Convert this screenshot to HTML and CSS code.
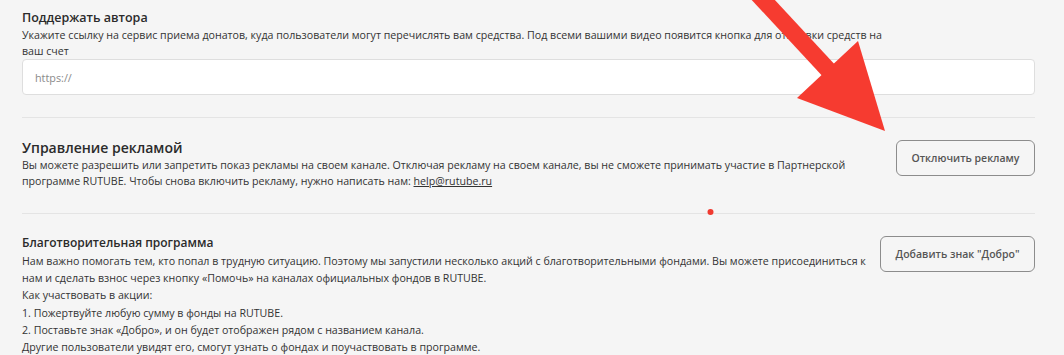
FILE: index.html
```html
<!DOCTYPE html>
<html lang="ru">
<head>
    <meta charset="UTF-8">
    <meta name="viewport" content="width=device-width, initial-scale=1.0">
    <title>Настройки канала</title>
    <link rel="stylesheet" href="styles.css">
</head>
<body>
    <div class="settings">
        <!-- Донаты -->
        <section class="section section-donate">
            <h2 class="section-title">Поддержать автора</h2>
            <p class="section-text">Укажите ссылку на сервис приема донатов, куда пользователи могут перечислять вам средства. Под всеми вашими видео появится кнопка для отправки средств на ваш счет</p>
            <input class="url-input" type="text" placeholder="https://">
        </section>

        <!-- Реклама -->
        <section class="section section-ads">
            <div class="section-body">
                <h2 class="section-title">Управление рекламой</h2>
                <p class="section-text">Вы можете разрешить или запретить показ рекламы на своем канале. Отключая рекламу на своем канале, вы не сможете принимать участие в Партнерской программе RUTUBE. Чтобы снова включить рекламу, нужно написать нам: <a href="mailto:help@rutube.ru">help@rutube.ru</a></p>
            </div>
            <button class="btn-outline" type="button">Отключить рекламу</button>
        </section>

        <!-- Благотворительность -->
        <section class="section section-charity">
            <div class="section-body">
                <h2 class="section-title">Благотворительная программа</h2>
                <p class="section-text">Нам важно помогать тем, кто попал в трудную ситуацию. Поэтому мы запустили несколько акций с благотворительными фондами. Вы можете присоединиться к нам и сделать взнос через кнопку «Помочь» на каналах официальных фондов в RUTUBE.<br>
                Как участвовать в акции:<br>
                1. Пожертвуйте любую сумму в фонды на RUTUBE.<br>
                2. Поставьте знак «Добро», и он будет отображен рядом с названием канала.<br>
                Другие пользователи увидят его, смогут узнать о фондах и поучаствовать в программе.</p>
            </div>
            <button class="btn-outline" type="button">Добавить знак "Добро"</button>
        </section>
    </div>

    <!-- Пометки поверх скриншота -->
    <svg class="annotation" width="1064" height="355" viewBox="0 0 1064 355">
        <line x1="754" y1="-10" x2="832" y2="74" stroke="#f63b30" stroke-width="17"/>
        <polygon points="797,98 858,41 885,131" fill="#f63b30"/>
        <circle cx="710.5" cy="212" r="3" fill="#f03a30"/>
    </svg>
</body>
</html>
```

FILE: styles.css
```css
body {
    margin: 0;
    background-color: #f5f5f5;
    font-family: "Open Sans", "Noto Sans", sans-serif;
    color: #2f2f2f;
    position: relative;
    overflow: hidden;
}
.settings {
    padding: 0 29px 0 22px;
}
.section {
    border-bottom: 1px solid #e4e4e4;
}
.section:last-child {
    border-bottom: none;
}
.section-donate {
    padding: 10px 0 22px;
}
.section-ads {
    display: flex;
    align-items: flex-start;
    gap: 8px;
    padding: 21px 0 24px;
}
.section-charity {
    display: flex;
    align-items: flex-start;
    gap: 8px;
    padding: 22px 0 0;
}
.section-body {
    flex: 1;
}
.section-title {
    margin: 0;
    font-size: 12.5px;
    font-weight: 600;
    line-height: 16px;
    color: #2b2b2b;
}
.section-ads .section-title {
    font-size: 14px;
    line-height: 17px;
}
.section-charity .section-title {
    font-size: 12px;
    line-height: 14px;
}
.section-text {
    margin: 0;
    max-width: 870px;
    font-size: 10.65px;
    line-height: 15.5px;
    color: #333;
}
.section-donate .section-text {
    margin-top: 1px;
    line-height: 16px;
}
.section-ads .section-text {
    margin-top: 1px;
    line-height: 16px;
}
.section-charity .section-text {
    margin-top: 3px;
    line-height: 17.2px;
}
.section-text a {
    color: #333;
    text-decoration: underline;
}
.url-input {
    display: block;
    box-sizing: border-box;
    width: 100%;
    height: 36px;
    padding: 0 12px;
    border: 1px solid #dedede;
    border-radius: 4px;
    background: white;
    font-family: inherit;
    font-size: 10.8px;
    color: #333;
}
.url-input::placeholder {
    color: #8a8a8a;
}
.btn-outline {
    flex-shrink: 0;
    height: 36px;
    padding: 0 14.5px;
    border: 1px solid #8c8c8c;
    border-radius: 6px;
    background: transparent;
    font-family: inherit;
    font-size: 10.5px;
    font-weight: 600;
    color: #555;
    cursor: pointer;
}
.section-ads .btn-outline {
    margin-top: 1px;
}
.annotation {
    position: absolute;
    top: 0;
    left: 0;
    pointer-events: none;
}
```
